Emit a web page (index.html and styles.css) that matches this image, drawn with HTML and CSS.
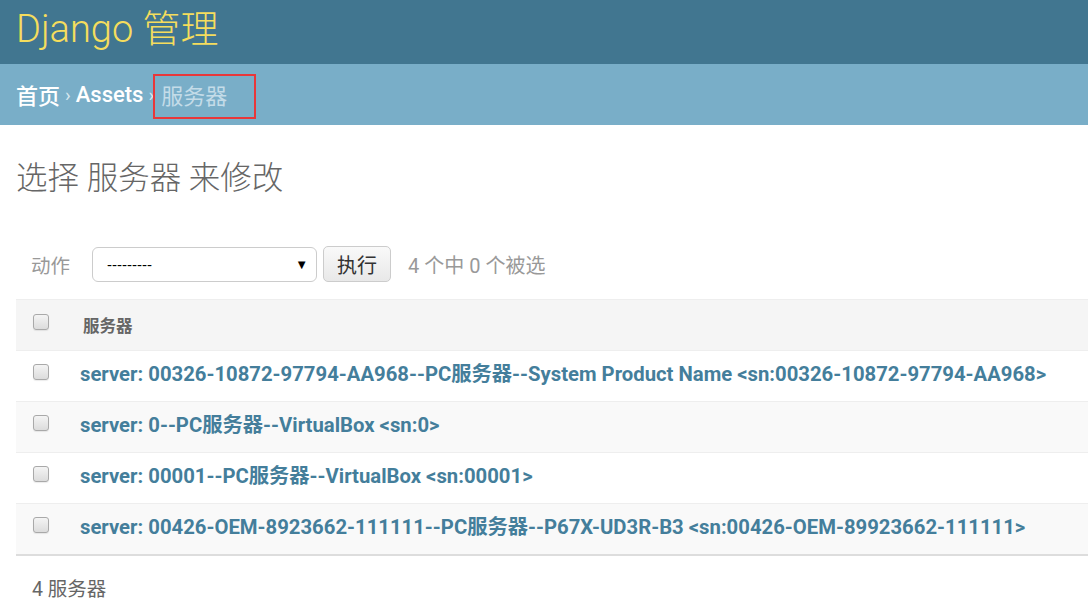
FILE: index.html
```html
<!DOCTYPE html>
<html lang="zh">
<head>
<meta charset="utf-8">
<title>选择 服务器 来修改 | Django 管理</title>
<link rel="stylesheet" href="styles.css">
</head>
<body>
<header class="header">
  <div class="branding">Django 管理</div>
</header>
<nav class="breadcrumbs">
  <a href="#" class="crumb">首页</a><span class="sep">›</span><a href="#" class="crumb">Assets</a><span class="sep">›</span><span class="current">服务器</span>
</nav>
<main class="content">
  <h1 class="page-title">选择 服务器 来修改</h1>
  <div class="actions">
    <label class="action-label">动作</label>
    <div class="select"><span class="select-value">---------</span><span class="select-arrow">▼</span></div>
    <button class="go" type="button">执行</button>
    <span class="counter">4 个中 0 个被选</span>
  </div>
  <div class="results">
    <div class="row head">
      <span class="cb"></span>
      <span class="col-title">服务器</span>
    </div>
    <div class="row">
      <span class="cb"></span>
      <a href="#" class="link">server: 00326-10872-97794-AA968--PC服务器--System Product Name &lt;sn:00326-10872-97794-AA968&gt;</a>
    </div>
    <div class="row alt">
      <span class="cb"></span>
      <a href="#" class="link">server: 0--PC服务器--VirtualBox &lt;sn:0&gt;</a>
    </div>
    <div class="row">
      <span class="cb"></span>
      <a href="#" class="link">server: 00001--PC服务器--VirtualBox &lt;sn:00001&gt;</a>
    </div>
    <div class="row alt last">
      <span class="cb"></span>
      <a href="#" class="link">server: 00426-OEM-8923662-111111--PC服务器--P67X-UD3R-B3 &lt;sn:00426-OEM-89923662-111111&gt;</a>
    </div>
  </div>
  <p class="paginator">4 服务器</p>
</main>
</body>
</html>
```

FILE: styles.css
```css
html, body {
  margin: 0;
  padding: 0;
  background: #fff;
  overflow: hidden;
}
body {
  font-family: Roboto, "Noto Sans CJK SC", "Liberation Sans", sans-serif;
  color: #333;
}
a { text-decoration: none; }

.header {
  background: #417690;
  height: 64px;
  display: flex;
  align-items: center;
  padding: 0 16px;
}
.branding {
  color: #f5dd5d;
  font-size: 38px;
  font-weight: 300;
  line-height: 1;
  margin-top: -6px;
}

.breadcrumbs {
  background: #79aec8;
  height: 61px;
  box-sizing: border-box;
  display: flex;
  align-items: center;
  padding: 0 16px 1px;
  font-size: 22px;
  color: #c4dce8;
}
.crumb {
  color: #fff;
  font-weight: 500;
}
.sep {
  color: #d6e7ef;
  font-size: 19px;
  padding: 0 5px;
}
.current {
  color: #c4dce8;
  box-sizing: border-box;
  width: 103px;
  height: 45px;
  border: 2px solid #e8373a;
  padding: 0 0 6px 6px;
  margin-left: -6px;
  margin-top: 5px;
  display: flex;
  align-items: center;
}

.content {
  padding: 0 0 0 16px;
}
.page-title {
  margin: 34px 0 0;
  font-size: 31.5px;
  font-weight: 300;
  color: #666;
  line-height: 40px;
}

.actions {
  display: flex;
  align-items: center;
  margin-top: 46px;
  height: 38px;
  padding-left: 15px;
}
.action-label {
  font-size: 19.5px;
  color: #999;
  margin-right: 22px;
}
.select {
  border: 1px solid #ccc;
  border-radius: 6px;
  display: flex;
  align-items: center;
  justify-content: space-between;
  padding: 0 8px 0 14px;
  box-sizing: border-box;
  width: 225px;
  height: 35px;
  font-family: "Liberation Sans", Arial, sans-serif;
  font-size: 15px;
  color: #000;
}
.select-arrow {
  font-size: 13px;
}
.go {
  margin-left: 6px;
  width: 68px;
  height: 36px;
  border: 1px solid #ccc;
  border-radius: 5px;
  background: linear-gradient(#f9f9f9, #e8e8e8);
  font-family: "Noto Sans CJK SC", sans-serif;
  font-size: 20px;
  color: #333;
  padding: 0;
}
.counter {
  margin-left: 17px;
  font-size: 20px;
  color: #999;
}

.results {
  margin-top: 16px;
}
.row {
  display: flex;
  align-items: center;
  height: 51px;
  box-sizing: border-box;
  padding-bottom: 8px;
  border-top: 1px solid #eee;
  background: #fff;
}
.row.alt { background: #f9f9f9; }
.row.head {
  background: #f5f5f5;
  border-top: 1px solid #eee;
  height: 51px;
  padding-bottom: 0;
}
.row.head .cb { margin-top: -6px; }
.row.last { border-bottom: 2px solid #ddd; height: 53px; }
.cb {
  flex: none;
  width: 14px;
  height: 14px;
  margin: 0 0 0 17px;
  border: 1px solid #a9a9a9;
  border-radius: 3px;
  background: linear-gradient(#f4f4f4, #dcdcdc);
  box-shadow: 0 1px 1px rgba(0,0,0,0.08);
}
.col-title {
  margin-left: 34px;
  font-size: 16.5px;
  font-weight: 700;
  color: #666;
}
.link {
  margin-left: 31px;
  font-size: 20.3px;
  font-weight: 700;
  color: #447e9b;
  white-space: nowrap;
}

.paginator {
  margin: 17px 0 0 16px;
  font-size: 19.5px;
  color: #666;
}
```
